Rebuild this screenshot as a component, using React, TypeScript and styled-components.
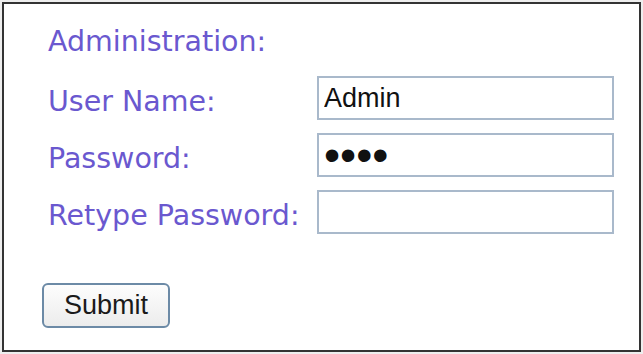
import React, { useState } from 'react';
import styled, { createGlobalStyle } from 'styled-components';

const GlobalStyle = createGlobalStyle`
  html, body {
    margin: 0;
    padding: 0;
    background: #eeeeee;
  }
  body {
    font-family: "DejaVu Sans", Verdana, sans-serif;
  }
`;

const Frame = styled.div`
  box-sizing: border-box;
  margin: 2px;
  width: 639px;
  height: 350px;
  border: 2px solid #333333;
  background: #ffffff;
  padding: 19px 0 0 44px;
`;

const Heading = styled.div`
  font-family: "DejaVu Sans", Verdana, sans-serif;
  font-size: 28.5px;
  line-height: 38px;
  color: #6a58cf;
  height: 53px;
`;

const FormGrid = styled.div`
  display: grid;
  grid-template-columns: 269px 297px;
  row-gap: 13px;
  align-items: center;
`;

const Label = styled.label`
  font-family: "DejaVu Sans", Verdana, sans-serif;
  font-size: 28.5px;
  line-height: 32px;
  color: #6a58cf;
  padding-top: 8px;
  white-space: nowrap;
`;

const Input = styled.input<{ $masked?: boolean }>`
  box-sizing: border-box;
  width: 297px;
  height: 44px;
  border: 2px solid #a9b9cb;
  background: #ffffff;
  padding: 0 5px;
  margin: 0;
  font-family: "Liberation Sans", Arial, sans-serif;
  font-size: ${p => (p.$masked ? '46px' : '27px')};
  color: #111111;
  outline: none;
`;

const Actions = styled.div`
  padding-top: 49px;
  margin-left: -6px;
`;

const SubmitButton = styled.button`
  box-sizing: border-box;
  width: 128px;
  height: 45px;
  border: 2px solid #6c8aa6;
  border-radius: 6px;
  background: linear-gradient(#fdfdfd, #ececec);
  font-family: "Liberation Sans", Arial, sans-serif;
  font-size: 27px;
  color: #1a1a1a;
  padding: 0;
  cursor: pointer;
`;

export default function App() {
  const [user, setUser] = useState('Admin');
  const [pass, setPass] = useState('abcd');
  const [retype, setRetype] = useState('');

  return (
    <>
      <GlobalStyle />
      <Frame>
        <Heading>Administration:</Heading>
        <FormGrid>
          <Label htmlFor="user">User Name:</Label>
          <Input id="user" value={user} onChange={e => setUser(e.target.value)} />
          <Label htmlFor="pass">Password:</Label>
          <Input id="pass" type="password" $masked value={pass} onChange={e => setPass(e.target.value)} />
          <Label htmlFor="retype">Retype Password:</Label>
          <Input id="retype" type="password" $masked value={retype} onChange={e => setRetype(e.target.value)} />
        </FormGrid>
        <Actions>
          <SubmitButton type="button">Submit</SubmitButton>
        </Actions>
      </Frame>
    </>
  );
}
